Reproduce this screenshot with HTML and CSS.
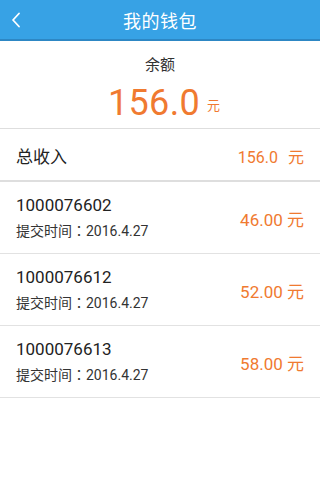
FILE: index.html
```html
<!DOCTYPE html>
<html>
<head>
<meta charset="utf-8">
<link rel="stylesheet" href="styles.css">
</head>
<body>
<div class="header">
  <svg class="back" width="10" height="16" viewBox="0 0 10 16"><path d="M8 1.5 L2 8 L8 14.5" fill="none" stroke="#fff" stroke-width="1.8" stroke-linecap="round" stroke-linejoin="round"/></svg>
  <div class="title">我的钱包</div>
</div>
<div class="balance">
  <div class="label">余额</div>
  <div class="amount"><span class="num">156.0</span><span class="unit">元</span></div>
</div>
<div class="total">
  <div class="tlabel">总收入</div>
  <div class="tval">156.0<span class="tunit">元</span></div>
</div>
<div class="list">
  <div class="item">
    <div class="info"><div class="id">1000076602</div><div class="time">提交时间<span class="colon">：</span>2016.4.27</div></div>
    <div class="money">46.00 元</div>
  </div>
  <div class="item">
    <div class="info"><div class="id">1000076612</div><div class="time">提交时间<span class="colon">：</span>2016.4.27</div></div>
    <div class="money">52.00 元</div>
  </div>
  <div class="item">
    <div class="info"><div class="id">1000076613</div><div class="time">提交时间<span class="colon">：</span>2016.4.27</div></div>
    <div class="money">58.00 元</div>
  </div>
</div>
</body>
</html>
```
FILE: styles.css
```css
html, body { margin: 0; padding: 0; background: #fff; }
body { font-family: Roboto, "Noto Sans CJK SC", sans-serif; color: #222; width: 320px; height: 480px; overflow: hidden; }
.header { height: 39px; background: #37a2e5; border-bottom: 2px solid #2d87c4; display: flex; align-items: center; justify-content: center; position: relative; }
.back { position: absolute; left: 11px; top: 12px; }
.title { color: #fff; font-size: 18px; letter-spacing: 0.5px; }
.balance { height: 88px; border-bottom: 1px solid #dedede; display: flex; flex-direction: column; align-items: center; box-sizing: border-box; padding-top: 13px; }
.label { font-size: 15px; color: #333; line-height: 22px; }
.amount { display: flex; align-items: center; margin-top: 5px; color: #f07a30; padding-left: 8px; }
.num { font-size: 36px; line-height: 44px; letter-spacing: 0.3px; }
.unit { font-size: 13px; margin-left: 7px; margin-top: 3px; }
.total { height: 51px; border-bottom: 2px solid #dedede; display: flex; align-items: center; justify-content: space-between; padding: 0 16px 0 16px; }
.tlabel { font-size: 17px; color: #222; padding-top: 2px; }
.tval { font-size: 16px; color: #f07a30; padding-top: 2px; }
.tunit { margin-left: 10px; font-size: 16px; }
.item { height: 71px; border-bottom: 1px solid #e2e2e2; display: flex; align-items: center; justify-content: space-between; padding: 0 16px; }
.info { display: flex; flex-direction: column; padding-top: 0; }
.id { font-size: 17px; line-height: 22px; color: #222; }
.time { font-size: 14px; line-height: 20px; margin-top: 4px; color: #333; }
.colon { font-family: "Noto Sans CJK TC", sans-serif; }
.money { font-size: 17px; color: #f07a30; margin-top: 2px; }
```
